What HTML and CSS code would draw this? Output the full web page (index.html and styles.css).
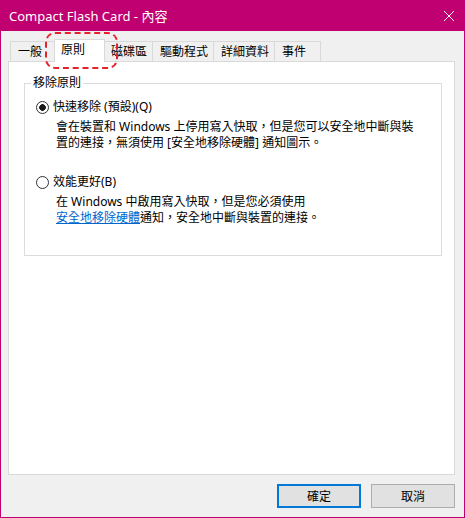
FILE: index.html
```html
<!DOCTYPE html>
<html lang="zh-Hant">
<head>
  <meta charset="UTF-8" />
  <title>Compact Flash Card - 內容</title>
  <link rel="stylesheet" href="styles.css">
</head>
<body>
  <div class="window">
    <div class="titlebar">
      <span class="title">Compact Flash Card - 內容</span>
      <svg class="close" width="12" height="12" viewBox="0 0 12 12">
        <path d="M1 1 L11 11 M11 1 L1 11" stroke="#fff" stroke-width="1" fill="none"/>
      </svg>
    </div>

    <div class="content">
      <div class="tabs">
        <div class="tab">一般</div>
        <div class="tab active">原則</div>
        <div class="tab">磁碟區</div>
        <div class="tab">驅動程式</div>
        <div class="tab">詳細資料</div>
        <div class="tab">事件</div>
      </div>

      <div class="panel">
        <fieldset class="group">
          <legend>移除原則</legend>

          <div class="option">
            <label class="opt-head"><span class="radio checked"></span>快速移除 (預設)(Q)</label>
            <p class="opt-desc">會在裝置和 Windows 上停用寫入快取，但是您可以安全地中斷與裝<br>置的連接，無須使用 [安全地移除硬體] 通知圖示。</p>
          </div>

          <div class="option second">
            <label class="opt-head"><span class="radio"></span>效能更好(B)</label>
            <p class="opt-desc">在 Windows 中啟用寫入快取，但是您必須使用<br><a href="#">安全地移除硬體</a>通知，安全地中斷與裝置的連接。</p>
          </div>
        </fieldset>
      </div>

      <div class="buttons">
        <button class="btn default">確定</button>
        <button class="btn">取消</button>
      </div>
    </div>

    <!-- annotation -->
    <div class="mark"></div>
  </div>
</body>
</html>
```

FILE: styles.css
```css
body {
  margin: 0;
  font-family: "Noto Sans", "Noto Sans CJK TC", sans-serif;
  font-size: 12px;
  color: #000;
}

.window {
  position: relative;
  width: 465px;
  height: 518px;
  box-sizing: border-box;
  border: 1px solid #c00070;
  border-top: none;
  background: #f0f0f0;
}

.titlebar {
  height: 31px;
  background: #c00070;
  display: flex;
  align-items: center;
  justify-content: space-between;
  padding: 0 9px 0 8px;
  color: #fff;
}

.title {
  font-size: 13px;
  line-height: 16px;
}

.close {
  display: block;
}

.content {
  padding: 8px 8px 0 7px;
}

.tabs {
  display: flex;
  align-items: flex-end;
  height: 22px;
  padding-left: 2px;
}

.tab {
  box-sizing: border-box;
  height: 20px;
  min-width: 47px;
  padding: 0 5px 0 7px;
  margin-right: -1px;
  border: 1px solid #d9d9d9;
  border-bottom: none;
  background: #f0f0f0;
  line-height: 19px;
}

.tab.active {
  position: relative;
  z-index: 1;
  height: 23px;
  min-width: 51px;
  margin: 0 -2px -1px -2px;
  padding-left: 6px;
  background: #fff;
  line-height: 20px;
}

.panel {
  box-sizing: border-box;
  width: 447px;
  height: 414px;
  background: #fff;
  border: 1px solid #d9d9d9;
  padding: 13px 12px 0 15px;
}

.group {
  box-sizing: border-box;
  height: 181px;
  margin: 0;
  padding: 0;
  border: 1px solid #dcdcdc;
}

.group legend {
  padding: 0 2px;
  margin-left: 6px;
  line-height: 16px;
}

.option {
  margin-top: 8px;
}

.option.second {
  margin-top: 23px;
}

.opt-head {
  display: flex;
  align-items: center;
  gap: 4px;
  padding-left: 11px;
  line-height: 16px;
}

.radio {
  box-sizing: border-box;
  width: 13px;
  height: 13px;
  border: 1px solid #333;
  border-radius: 50%;
  background: #fff;
}

.radio.checked {
  background: radial-gradient(circle, #1a1a1a 0 3px, #fff 3.6px);
}

.opt-desc {
  margin: 4px 0 0 31px;
  line-height: 16px;
}

.opt-desc a {
  color: #0066cc;
}

.buttons {
  display: flex;
  justify-content: flex-end;
  gap: 10px;
  margin-top: 9px;
  padding-right: 1px;
}

.btn {
  box-sizing: border-box;
  width: 84px;
  height: 24px;
  font: inherit;
  background: #e1e1e1;
  border: 1px solid #adadad;
  padding: 0;
}

.btn.default {
  border: 2px solid #0078d7;
}

.mark {
  position: absolute;
  left: 44px;
  top: 32px;
  width: 73px;
  height: 37px;
  box-sizing: border-box;
  border: 2px dashed #e8202a;
  border-radius: 10px;
}
```
